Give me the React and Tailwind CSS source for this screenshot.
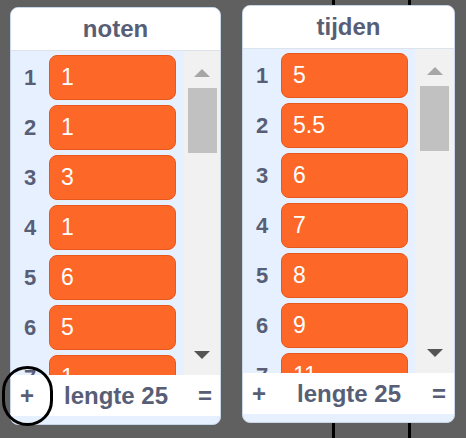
import React from "react";

const noten = ["1", "1", "3", "1", "6", "5", "1"];
const tijden = ["5", "5.5", "6", "7", "8", "9", "11"];

function Tri({ down, color }) {
  return (
    <svg width="16" height="8" viewBox="0 0 16 8" className="block">
      {down ? (
        <polygon points="0,0 16,0 8,8" fill={color} />
      ) : (
        <polygon points="0,8 16,8 8,0" fill={color} />
      )}
    </svg>
  );
}

function Panel({ title, values, outer, scrollW }) {
  return (
    <div
      className={
        "relative flex flex-col h-[418px] rounded-[8px] overflow-hidden border border-[#c9d5e8] bg-[#e6f0ff] " +
        outer
      }
    >
      <div className="h-[43px] shrink-0 bg-white flex items-center justify-center text-[24px] font-bold text-[#575e75] border-b border-[#dde3ec]">
        {title}
      </div>
      <div className="flex-1 flex overflow-hidden">
        <div className="flex-1 flex flex-col gap-[5px] pt-[4px] overflow-hidden">
          {values.map((v, i) => (
            <div key={i} className="flex items-center shrink-0 h-[45px]">
              <div className="w-[38px] shrink-0 text-center text-[22px] font-bold text-[#575e75]">
                {i + 1}
              </div>
              <div className="w-[127px] h-[45px] shrink-0 rounded-[8px] bg-[#fd6727] border border-[#e8581c] flex items-center pl-[11px] text-[23px] text-white">
                {v}
              </div>
            </div>
          ))}
        </div>
        <div
          className={
            "shrink-0 bg-[#f1f1f1] flex flex-col items-center pt-[18px] pb-[16px] " +
            scrollW
          }
        >
          <Tri color="#a6a6a6" />
          <div className="mt-[11px] w-[29px] h-[65px] bg-[#c1c1c1]" />
          <div className="flex-1" />
          <Tri down color="#555555" />
        </div>
      </div>
      <div className="h-[41px] shrink-0 bg-white flex items-center justify-between pl-[9px] pr-[8px] font-bold text-[#575e75]">
        <span className="text-[24px] leading-none">+</span>
        <span className="text-[24px] leading-none">lengte 25</span>
        <span className="text-[24px] leading-none">=</span>
      </div>
      <div className="h-[8px] shrink-0" />
    </div>
  );
}

export default function App() {
  return (
    <div className="relative w-[466px] h-[438px] bg-[#606060] overflow-hidden flex items-start font-['Liberation_Sans',Arial,sans-serif]">
      <div className="absolute left-[332px] top-0 w-[3px] h-[438px] bg-black" />
      <div className="absolute left-[408px] top-0 w-[3px] h-[438px] bg-black" />
      <Panel title="noten" values={noten} outer="ml-[10px] mt-[7px] w-[211px]" scrollW="w-[36px]" />
      <Panel title="tijden" values={tijden} outer="ml-[21px] mt-[5px] w-[213px]" scrollW="w-[39px]" />
      <div className="absolute left-[2px] top-[366px] w-[51px] h-[60px] rounded-full border-[3px] border-black" />
    </div>
  );
}
